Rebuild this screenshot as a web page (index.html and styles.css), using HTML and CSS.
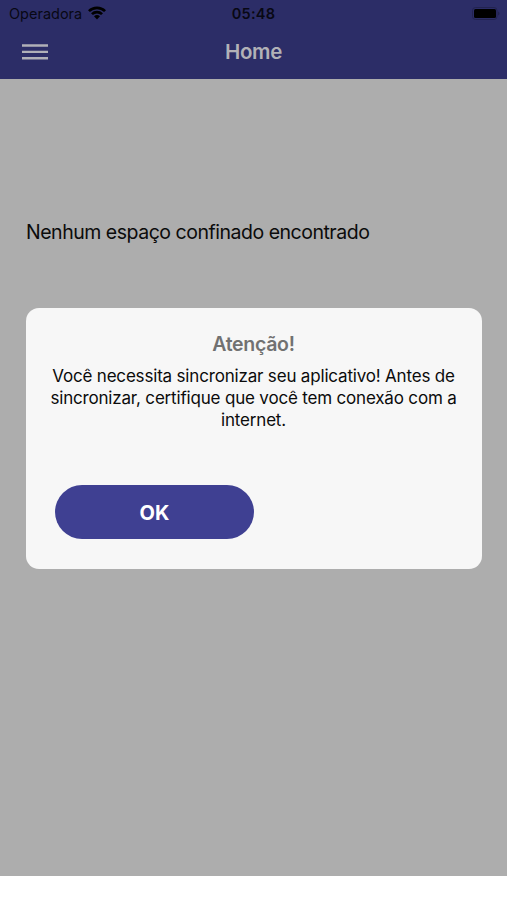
FILE: index.html
```
<!DOCTYPE html>
<html lang="pt-BR">
<head>
    <meta charset="UTF-8">
    <meta name="viewport" content="width=device-width, initial-scale=1.0">
    <title>Home</title>
    <link rel="stylesheet" href="styles.css">
</head>
<body>
    <div class="screen">
        <header class="header">
            <div class="status-bar">
                <div class="carrier">
                    <span>Operadora</span>
                    <svg class="wifi" viewBox="0 0 18 14" width="18" height="14">
                        <path d="M0 4.2a13 13 0 0 1 18 0l-1.9 1.9a10.3 10.3 0 0 0-14.2 0z"/>
                        <path d="M3 7.2a8.7 8.7 0 0 1 12 0l-1.9 1.9a6 6 0 0 0-8.2 0z"/>
                        <path d="M6 10.3a4.4 4.4 0 0 1 6 0l-3 3.2z"/>
                    </svg>
                </div>
                <span class="time">05:48</span>
                <svg class="battery" viewBox="0 0 28 14" width="28" height="14">
                    <rect class="battery-frame" x="0.5" y="0.5" width="24.5" height="12" rx="3"/>
                    <rect x="2" y="2" width="22" height="9" rx="1.5"/>
                    <path class="battery-tip" d="M26 4.5q1.5 .5 1.5 2t-1.5 2z"/>
                </svg>
            </div>
            <div class="nav-bar">
                <button class="menu-button" aria-label="Menu">
                    <svg viewBox="0 0 26 16" width="26" height="16">
                        <path d="M0 1.5h26M0 7.9h26M0 14.3h26"/>
                    </svg>
                </button>
                <h1>Home</h1>
            </div>
        </header>

        <main class="content">
            <p class="empty-message">Nenhum espaço confinado encontrado</p>

            <div class="dialog" role="alertdialog">
                <h2>Atenção!</h2>
                <p class="dialog-text">
                    <span>Você necessita sincronizar seu aplicativo! Antes de</span>
                    <span>sincronizar, certifique que você tem conexão com a</span>
                    <span>internet.</span>
                </p>
                <button class="ok-button">OK</button>
            </div>
        </main>
    </div>
</body>
</html>
```
FILE: styles.css
```
* {
    box-sizing: border-box;
}

body {
    margin: 0;
    background-color: #fff;
    color: #0b0b0b;
    font-family: Inter, "Liberation Sans", sans-serif;
}

h1, h2, p {
    margin: 0;
}

.screen {
    display: flex;
    flex-direction: column;
    height: 876px;
    background-color: #adadad;
}

.header {
    height: 79px;
    background-color: #2c2d67;
}

.status-bar {
    display: grid;
    grid-template-columns: 1fr auto 1fr;
    align-items: center;
    height: 27px;
    padding: 0 7px 0 9px;
    color: #080814;
    font-size: 14.5px;
}

.carrier {
    display: flex;
    align-items: center;
    gap: 6px;
}

.wifi {
    margin-top: -2px;
}

.time {
    margin-right: 2px;
    font-weight: 600;
    letter-spacing: 0.25px;
}

.battery {
    justify-self: end;
}

.battery-frame {
    fill: none;
    stroke: #222350;
}

.battery-tip {
    fill: #222350;
}

.nav-bar {
    display: grid;
    grid-template-columns: 1fr auto 1fr;
    align-items: center;
    height: 50px;
    padding: 0 22px;
}

.menu-button {
    display: flex;
    width: 26px;
    padding: 0;
    border: none;
    background: none;
}

.menu-button path {
    fill: none;
    stroke: #b0b0b8;
    stroke-width: 2.4;
}

h1 {
    padding-bottom: 2px;
    color: #b2b2b7;
    font-size: 20.5px;
    font-weight: 600;
    letter-spacing: -0.3px;
}

.content {
    padding: 141px 26px 0;
}

.empty-message {
    font-size: 19.5px;
    letter-spacing: -0.48px;
    line-height: 24px;
}

.dialog {
    width: 456px;
    height: 261px;
    margin-top: 64px;
    padding: 24px 21px 0 20px;
    border-radius: 13px;
    background-color: #f7f7f7;
    text-align: center;
}

h2 {
    color: #717171;
    font-size: 19.5px;
    font-weight: 600;
    letter-spacing: -0.3px;
    line-height: 24px;
}

.dialog-text {
    margin-top: 9px;
    font-size: 17px;
    letter-spacing: -0.18px;
    line-height: 22px;
}

.dialog-text span {
    display: block;
    white-space: nowrap;
}

.ok-button {
    display: block;
    width: 199px;
    height: 54px;
    margin: 54px 0 0 9px;
    padding: 2px 0 0;
    border: none;
    border-radius: 27px;
    background-color: #3f4092;
    color: #fff;
    font-family: inherit;
    font-size: 20px;
    font-weight: 700;
}
```
